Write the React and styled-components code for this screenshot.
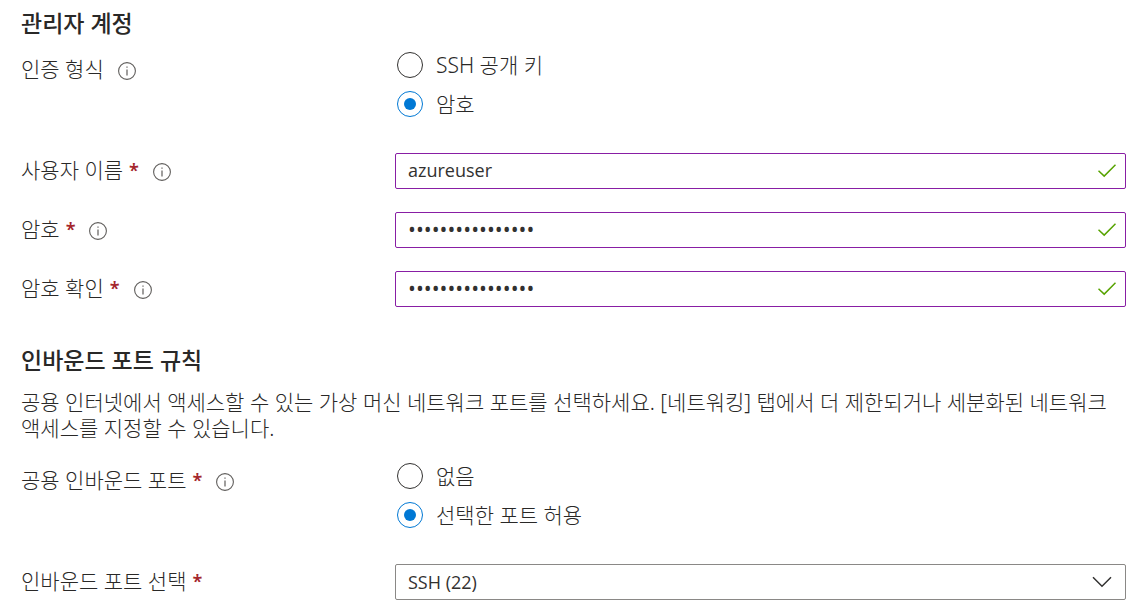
import styled, { createGlobalStyle } from 'styled-components';

const GlobalStyle = createGlobalStyle`
  * {
    box-sizing: border-box;
  }

  body {
    margin: 0;
    background: #fff;
    color: #292827;
    font-family: 'Noto Sans', 'Noto Sans CJK KR', sans-serif;
    font-size: 21px;
    font-weight: 300;
  }
`;

const Form = styled.form`
  padding: 10px 6px 10px 21px;
`;
const Section = styled.section`
  margin-bottom: 40px;
`;
const Title = styled.h2`
  margin: 0 0 16px;
  font-size: 23px;
  font-weight: 500;
  line-height: 26px;
`;
const Description = styled.p`
  margin: 0 0 22px;
  line-height: 26px;
  word-break: keep-all;
`;

const Row = styled.div`
  display: grid;
  grid-template-columns: 374px 1fr;
  align-items: center;
  margin-bottom: 23px;

  &:last-child {
    margin-bottom: 0;
  }
`;
const RadioRow = styled(Row).attrs({ role: 'radiogroup' })`
  align-items: start;
  margin-bottom: 36px;
`;
const LabelCell = styled.div`
  display: flex;
  align-items: center;
  line-height: 28px;
  padding: ${({ $top }) => ($top ? '3px 0 0' : '0 0 2px')};
`;
const Required = styled.span`
  margin-left: 6px;
  color: #a4262c;
  font-size: 18px;
  font-weight: 600;
`;
const InfoSvg = styled.svg`
  width: 18px;
  height: 18px;
  margin: 3px 0 0 14px;
`;

const RadioList = styled.div`
  display: flex;
  flex-direction: column;
  gap: 13px;
  padding-left: 2px;
`;
const RadioLabel = styled.label`
  display: flex;
  align-items: center;
  gap: 13px;
  line-height: 26px;
`;
const RadioInput = styled.input.attrs({ type: 'radio' })`
  appearance: none;
  display: grid;
  place-items: center;
  width: 26px;
  height: 26px;
  margin: 0;
  border: 1px solid #323130;
  border-radius: 50%;

  &:checked {
    border-color: #0078d4;
  }

  &:checked::before {
    content: '';
    width: 12px;
    height: 12px;
    border-radius: 50%;
    background: #0078d4;
  }
`;

const Field = styled.div`
  display: flex;
  align-items: center;
  height: 36px;
  padding-right: 9px;
  border: 1px solid ${({ $valid }) => ($valid ? '#881ea4' : '#8a8886')};
  border-radius: 2px;
  position: relative;
`;
const TextInput = styled.input`
  flex: 1;
  min-width: 0;
  height: 100%;
  padding: 0 12px 2px;
  border: none;
  outline: none;
  background: transparent;
  color: #323130;
  font-family: 'Open Sans', sans-serif;
  font-size: ${({ type }) => (type === 'password' ? '21px' : '18px')};
`;
const SelectInput = styled.select`
  appearance: none;
  width: 100%;
  height: 100%;
  padding: 0 12px;
  border: none;
  outline: none;
  background: transparent;
  color: #323130;
  font-family: 'Open Sans', sans-serif;
  font-size: 18px;
`;
const CheckSvg = styled.svg`
  width: 18px;
  height: 14px;
`;
const ChevronSvg = styled.svg`
  width: 20px;
  height: 12px;
  position: absolute;
  right: 13px;
  pointer-events: none;
`;

const InfoIcon = () => (
  <InfoSvg viewBox="0 0 18 18" fill="none" stroke="#605e5c" aria-hidden="true">
    <circle cx="9" cy="9" r="8.4" strokeWidth="1.1" />
    <path d="M9 7.4v6M9 4.5v1.3" strokeWidth="1.2" />
  </InfoSvg>
);
const CheckIcon = () => (
  <CheckSvg viewBox="0 0 18 14" fill="none" stroke="#57a300" aria-hidden="true">
    <path d="M0.5 6.7L6.2 12.1L17.5 0.7" strokeWidth="1.5" />
  </CheckSvg>
);
const ChevronIcon = () => (
  <ChevronSvg viewBox="0 0 20 12" fill="none" stroke="#323130" aria-hidden="true">
    <path d="M1 1.3L10 10.3L19 1.3" strokeWidth="1.5" />
  </ChevronSvg>
);

const FieldLabel = ({ id, htmlFor, text, required, info, top }) => (
  <LabelCell $top={top}>
    {htmlFor ? <label htmlFor={htmlFor}>{text}</label> : <span id={id}>{text}</span>}
    {required && <Required>*</Required>}
    {info && <InfoIcon />}
  </LabelCell>
);

const TextRow = ({ id, label, type, value }) => (
  <Row>
    <FieldLabel htmlFor={id} text={label} required info />
    <Field $valid>
      <TextInput id={id} type={type} defaultValue={value} />
      <CheckIcon />
    </Field>
  </Row>
);

const RadioGroup = ({ name, label, required, options, selected }) => (
  <RadioRow aria-labelledby={`${name}-label`}>
    <FieldLabel id={`${name}-label`} text={label} required={required} info top />
    <RadioList>
      {options.map((option) => (
        <RadioLabel key={option}>
          <RadioInput name={name} defaultChecked={option === selected} />
          {option}
        </RadioLabel>
      ))}
    </RadioList>
  </RadioRow>
);

export default function App() {
  return (
    <>
      <GlobalStyle />
      <Form lang="ko">
        <Section>
          <Title>관리자 계정</Title>
          <RadioGroup
            name="auth"
            label="인증 형식"
            options={['SSH 공개 키', '암호']}
            selected="암호"
          />
          <TextRow id="username" label="사용자 이름" type="text" value="azureuser" />
          <TextRow id="password" label="암호" type="password" value="Password12345678" />
          <TextRow id="confirm" label="암호 확인" type="password" value="Password12345678" />
        </Section>
        <section>
          <Title>인바운드 포트 규칙</Title>
          <Description>
            공용 인터넷에서 액세스할 수 있는 가상 머신 네트워크 포트를 선택하세요. [네트워킹] 탭에서 더 제한되거나
            세분화된 네트워크 액세스를 지정할 수 있습니다.
          </Description>
          <RadioGroup
            name="inbound"
            label="공용 인바운드 포트"
            required
            options={['없음', '선택한 포트 허용']}
            selected="선택한 포트 허용"
          />
          <Row>
            <FieldLabel htmlFor="port" text="인바운드 포트 선택" required />
            <Field>
              <SelectInput id="port" defaultValue="22">
                <option value="22">SSH (22)</option>
              </SelectInput>
              <ChevronIcon />
            </Field>
          </Row>
        </section>
      </Form>
    </>
  );
}
